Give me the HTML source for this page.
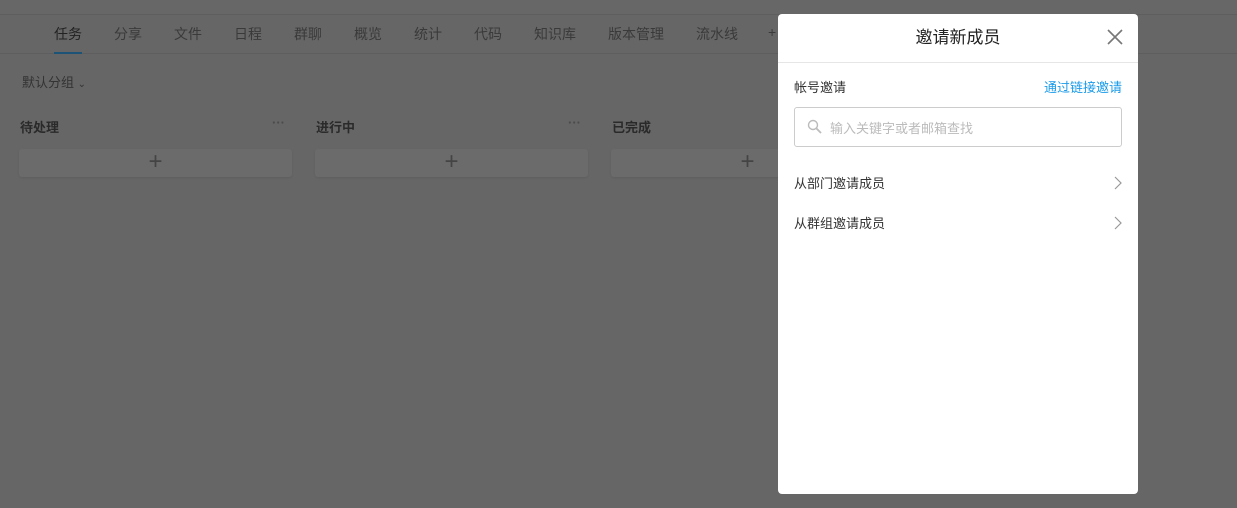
<!DOCTYPE html>
<html><head><meta charset="utf-8"><style>
*{margin:0;padding:0;box-sizing:border-box}
body{width:1237px;height:508px;overflow:hidden;background:#666;font-family:"Liberation Sans","Noto Sans CJK SC",sans-serif;position:relative}
.top{position:absolute;left:0;top:0;width:1237px;height:15px;background:#676767;border-bottom:1px solid #5e5e5e}
.tabs{position:absolute;top:15px;left:0;width:1237px;height:39px;border-bottom:1px solid #5e5e5e}
.tab{position:absolute;top:9px;font-size:14px;color:#3a3a3a;white-space:nowrap}
.tab.a{color:#222}
.ul{position:absolute;left:54px;top:52px;width:28px;height:2px;background:#1d5377}
.t{position:absolute;color:#2a2a2a;font-size:14px}
.card{position:absolute;top:149px;width:273px;height:28px;background:#6b6b6b;border-radius:3px;box-shadow:0 1px 2px rgba(0,0,0,.08);color:#444;text-align:center;font-size:24px;line-height:26px;font-weight:200}
.dots{position:absolute;top:115px;color:#4a4a4a;font-size:13px;letter-spacing:0px;font-weight:bold}
.modal{position:absolute;left:778px;top:14px;width:360px;height:480px;background:#fff;border-radius:4px}
.mh{height:49px;border-bottom:1px solid #e6e6e6;text-align:center;font-size:17px;line-height:48px;color:#222;position:relative}
.x{position:absolute;right:14px;top:14px}
.m{position:absolute;font-size:13px;color:#333}
.inp{position:absolute;left:16px;top:93px;width:328px;height:40px;border:1px solid #ccc;border-radius:3px}
.ph{position:absolute;left:35px;top:10px;font-size:13px;color:#bbb}
</style></head><body>
<div class="top"></div>
<div class="tabs">
<span class="tab a" style="left:54px">任务</span>
<span class="tab" style="left:114px">分享</span>
<span class="tab" style="left:174px">文件</span>
<span class="tab" style="left:234px">日程</span>
<span class="tab" style="left:294px">群聊</span>
<span class="tab" style="left:354px">概览</span>
<span class="tab" style="left:414px">统计</span>
<span class="tab" style="left:474px">代码</span>
<span class="tab" style="left:534px">知识库</span>
<span class="tab" style="left:608px">版本管理</span>
<span class="tab" style="left:696px">流水线</span>
<span class="tab" style="left:768px">+</span>
</div>
<div class="ul"></div>
<div class="t" style="left:22px;top:72px;font-size:13px;color:#333">默认分组 <span style="font-size:10px">⌄</span></div>
<div class="t" style="left:20px;top:117px;font-weight:bold;font-size:13px">待处理</div>
<div class="t" style="left:316px;top:117px;font-weight:bold;font-size:13px">进行中</div>
<div class="t" style="left:612px;top:117px;font-weight:bold;font-size:13px">已完成</div>
<div class="dots" style="left:272px">···</div>
<div class="dots" style="left:568px">···</div>
<div class="card" style="left:19px">+</div>
<div class="card" style="left:315px">+</div>
<div class="card" style="left:611px">+</div>
<div class="modal">
<div class="mh">邀请新成员<svg class="x" width="18" height="18" viewBox="0 0 18 18"><path d="M2 2L16 16M16 2L2 16" stroke="#777" stroke-width="1.6"/></svg></div>
<div class="m" style="left:16px;top:63px">帐号邀请</div>
<div class="m" style="right:16px;top:63px;color:#1a9bea">通过链接邀请</div>
<div class="inp"><svg style="position:absolute;left:12px;top:11px" width="16" height="16" viewBox="0 0 16 16"><circle cx="6" cy="6" r="4.5" fill="none" stroke="#bbb" stroke-width="1.4"/><path d="M9.5 9.5L14 14" stroke="#bbb" stroke-width="1.8"/></svg><span class="ph">输入关键字或者邮箱查找</span></div>
<div class="m" style="left:16px;top:159px">从部门邀请成员</div>
<div class="m" style="left:16px;top:199px">从群组邀请成员</div>
<svg style="position:absolute;right:16px;top:162px" width="8" height="14" viewBox="0 0 8 14"><path d="M1 1L7 7L1 13" fill="none" stroke="#999" stroke-width="1.2"/></svg>
<svg style="position:absolute;right:16px;top:202px" width="8" height="14" viewBox="0 0 8 14"><path d="M1 1L7 7L1 13" fill="none" stroke="#999" stroke-width="1.2"/></svg>
</div>
</body></html>
